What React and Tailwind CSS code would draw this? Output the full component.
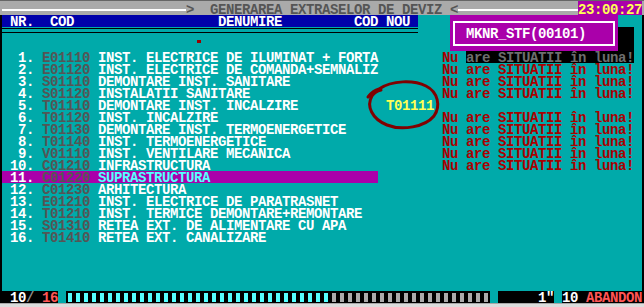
const items = [
  [1, "E01110", "INST. ELECTRICE DE ILUMINAT + FORTA", "shadow"],
  [2, "E01120", "INST. ELECTRICE DE COMANDA+SEMNALIZ", "nu"],
  [3, "S01110", "DEMONTARE INST. SANITARE", "nu"],
  [4, "S01120", "INSTALATII SANITARE", "nu"],
  [5, "T01110", "DEMONTARE INST. INCALZIRE", "new"],
  [6, "T01120", "INST. INCALZIRE", "nu"],
  [7, "T01130", "DEMONTARE INST. TERMOENERGETICE", "nu"],
  [8, "T01140", "INST. TERMOENERGETICE", "nu"],
  [9, "V01110", "INST. VENTILARE MECANICA", "nu"],
  [10, "C01210", "INFRASTRUCTURA", "nu"],
  [11, "C01220", "SUPRASTRUCTURA", "sel"],
  [12, "C01230", "ARHITECTURA", ""],
  [13, "E01210", "INST. ELECTRICE DE PARATRASNET", ""],
  [14, "T01210", "INST. TERMICE DEMONTARE+REMONTARE", ""],
  [15, "S01310", "RETEA EXT. DE ALIMENTARE CU APA", ""],
  [16, "T01410", "RETEA EXT. CANALIZARE", ""],
];

const MSG = "Nu are SITUATII în luna!";

// one 80-column text row; every direct child gets the same top offset
const Item = ({ n, code, name, kind }) => {
  const sel = kind === "sel";
  return (
    <div className="flex h-[12px] *:pt-[2px]">
      <div className={sel ? "flex w-[376px] bg-[#aa00aa]" : "flex w-[376px]"}>
        <span className="text-white">{String(n).padStart(3, " ") + ". "}</span>
        <span className="text-[#555555]">{code + " "}</span>
        <span className={sel ? "text-[#55ffff]" : "text-white"}>{name}</span>
      </div>
      {kind === "nu" && (
        <>
          <span className="w-[64px]"></span>
          <span className="text-[#aa0000]">{MSG}</span>
        </>
      )}
      {kind === "shadow" && (
        <>
          <span className="w-[64px]"></span>
          <span className="w-[24px] text-[#aa0000]">Nu </span>
          <span className="w-[168px] bg-black text-[#6e6e6e]">are SITUATII în luna!</span>
        </>
      )}
      {kind === "new" && (
        <>
          <span className="w-[8px]"></span>
          <span className="text-[#ffff55]">T01111</span>
        </>
      )}
    </div>
  );
};

const App = () => {
  const cells = Array.from({ length: 53 }, (_, i) => i < 33);

  return (
    <div className="relative w-[644px] h-[307px] overflow-hidden bg-black font-['Liberation_Mono',monospace] font-bold text-[14px] tracking-[-0.4px] leading-[10px] whitespace-pre">
      <div className="flex flex-col h-[303px] px-[2px] bg-black">
        {/* title bar */}
        <div className="flex h-[15px] bg-[#aaaaaa] -mx-[2px] px-[2px] border-t border-[#666666]">
          <div className="w-[184px] pt-[8px]">
            <div className="h-[2px] bg-white"></div>
          </div>
          <div className="pt-[4px] text-[#555555]">{">  GENERAREA EXTRASELOR DE DEVIZ <"}</div>
          <div className="w-[120px] pt-[8px]">
            <div className="h-[2px] bg-white"></div>
          </div>
          <div className="flex-1 bg-[#aa00aa] pt-[4px] text-[#ffff55]">23:00:27</div>
        </div>

        <div className="flex flex-col flex-1 bg-[#00aaaa]">
          {/* header */}
          <div className="flex h-[12px]">
            <div className="w-[416px] pt-[2px] bg-[#0000aa] text-white">
              {" NR.  COD                  DENUMIRE         COD NOU "}
            </div>
          </div>

          {/* double line */}
          <div className="h-[12px]">
            <div className="w-[416px] pt-[1px]">
              <div className="h-[1px] bg-black"></div>
              <div className="h-[1px] mt-[3px] bg-black"></div>
            </div>
          </div>

          {/* marker row */}
          <div className="h-[12px] pt-[1px]">
            <div className="ml-[195px] w-[4px] h-[3px] bg-[#990000]"></div>
          </div>

          {items.map(([n, code, name, kind]) => (
            <Item key={n} n={n} code={code} name={name} kind={kind} />
          ))}

          <div className="flex-1"></div>

          {/* status bar */}
          <div className="flex h-[12px]">
            <div className="w-[56px] pt-[2px] bg-black">
              <span className="text-white"> 10</span>
              <span className="text-[#8a8a8a]">/ </span>
              <span className="text-[#ff5555]">16</span>
            </div>
            <div className="w-[8px]"></div>
            <div className="flex w-[424px] bg-black">
              {cells.map((on, i) => (
                <div key={i} className="w-[8px] pt-[2px] pl-[2px]">
                  <div className={on ? "w-[4px] h-[9px] bg-[#55ffff]" : "w-[4px] h-[9px] bg-[#aaaaaa]"}></div>
                </div>
              ))}
            </div>
            <div className="w-[8px]"></div>
            <div className="w-[56px] pt-[2px] bg-black text-white">{'     1"'}</div>
            <div className="w-[8px]"></div>
            <div className="flex-1 pt-[2px] bg-black">
              <span className="text-white">10 </span>
              <span className="text-[#ff5555]">ABANDON</span>
            </div>
          </div>
        </div>
      </div>
      <div className="h-[4px] bg-[#dcdcdc] border-t border-[#a8a8a8]"></div>

      {/* popup window */}
      <div className="absolute left-[450px] top-[15px] w-[168px] h-[36px] bg-[#aa00aa] pt-[6px] px-[3px]">
        <div className="h-[25px] border-2 border-white pl-[11px] pt-[6px] text-white">MKNR_STF(00101)</div>
        <div className="absolute left-full top-[12px] w-[16px] h-[24px] bg-black"></div>
      </div>

      {/* hand-drawn mark */}
      <svg className="absolute left-0 top-0 pointer-events-none" width="644" height="307">
        <path
          d="M368 97 C371 93 375 90 379 89 C392 80 414 80 426 86 C438 92 441 106 434 116 C425 127 402 131 387 125 C372 119 366 106 372 96 C374 93 377 91 381 90"
          fill="none"
          stroke="#800000"
          strokeWidth="3"
          strokeLinecap="round"
          strokeLinejoin="round"
        />
      </svg>
    </div>
  );
};

export default App;
